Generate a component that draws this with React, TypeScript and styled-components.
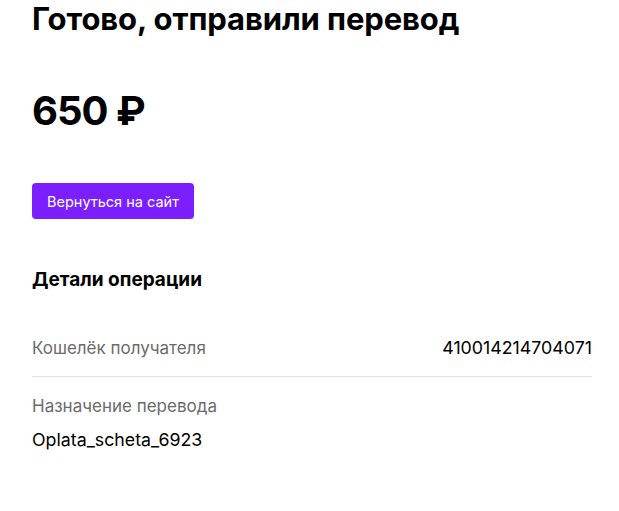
import styled, { createGlobalStyle } from "styled-components";

const GlobalStyle = createGlobalStyle`
  body {
    margin: 0;
    background: #ffffff;
    font-family: Inter, "Noto Sans", sans-serif;
    color: #000000;
  }
`;

const Page = styled.main`
  width: 560px;
  padding: 0 0 0 32px;
`;

const Title = styled.h1`
  margin: 0;
  padding-top: 1px;
  font-size: 31px;
  line-height: 36px;
  font-weight: 700;
  letter-spacing: -0.1px;
`;

const Amount = styled.div`
  margin-top: 48px;
  font-size: 40px;
  line-height: 52px;
  font-weight: 700;
  letter-spacing: -1px;
`;

const BackButton = styled.button`
  margin-top: 46px;
  height: 36px;
  padding: 0 15px;
  border: none;
  border-radius: 4px;
  background: #7b1fff;
  color: #ffffff;
  font-family: inherit;
  font-size: 14.5px;
  cursor: pointer;
`;

const SectionTitle = styled.h2`
  margin: 49px 0 0;
  font-size: 19px;
  line-height: 24px;
  font-weight: 700;
`;

const Details = styled.dl`
  margin: 35px 0 0;
`;

const Row = styled.div<{ $stacked?: boolean }>`
  display: flex;
  flex-direction: ${(p) => (p.$stacked ? "column" : "row")};
  justify-content: space-between;
  gap: ${(p) => (p.$stacked ? "12px" : "0")};
  padding: ${(p) => (p.$stacked ? "18px 0 0" : "10px 0 17px")};
  border-bottom: ${(p) => (p.$stacked ? "none" : "1px solid #e5e5e5")};
`;

const Label = styled.dt`
  font-size: 17px;
  line-height: 22px;
  color: #6b6b6b;
`;

const Value = styled.dd`
  margin: 0;
  font-size: 17.8px;
  line-height: 22px;
  color: #000000;
`;

const App = (): JSX.Element => {
  return (
    <>
      <GlobalStyle />
      <Page>
        <Title>Готово, отправили перевод</Title>
        <Amount>650 ₽</Amount>
        <BackButton>Вернуться на сайт</BackButton>
        <SectionTitle>Детали операции</SectionTitle>
        <Details>
          <Row>
            <Label>Кошелёк получателя</Label>
            <Value>410014214704071</Value>
          </Row>
          <Row $stacked>
            <Label>Назначение перевода</Label>
            <Value>Oplata_scheta_6923</Value>
          </Row>
        </Details>
      </Page>
    </>
  );
};

export default App;
